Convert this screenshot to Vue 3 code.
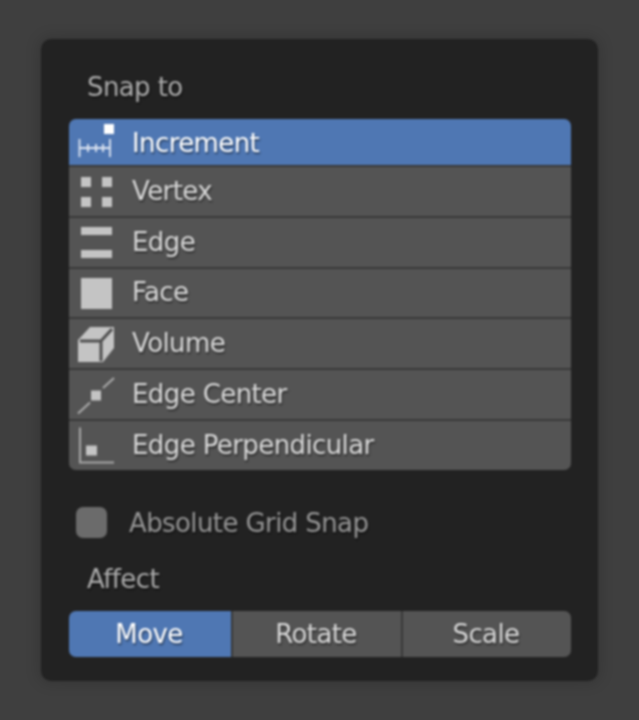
<template>
  <div class="page">
    <div class="popup">
      <div class="label">Snap to</div>
      <div class="list">
        <div
          v-for="item in snapItems"
          :key="item.name"
          class="row"
          :class="{ active: item.name === 'Increment' }"
        >
          <svg class="icon" viewBox="0 0 40 40" v-html="item.icon"></svg>
          <span class="row-text">{{ item.name }}</span>
        </div>
      </div>
      <div class="check-row">
        <div class="check"></div>
        <span>Absolute Grid Snap</span>
      </div>
      <div class="label affect">Affect</div>
      <div class="segments">
        <div v-for="s in affect" :key="s" class="seg" :class="{ active: s === 'Move' }">{{ s }}</div>
      </div>
    </div>
  </div>
</template>

<script setup>
const grey = '#c4c4c4'

const snapItems = [
  {
    name: 'Increment',
    icon: `<rect x="27" y="2" width="10" height="10" fill="#fff"/>
      <path d="M2.5 17v18M33 17v18M2 26h31M11 22v8M19 22v8M26 22v8" stroke="#dfe6f2" stroke-width="1.8" fill="none"/>`
  },
  {
    name: 'Vertex',
    icon: `<g fill="${grey}"><rect x="4" y="6" width="10" height="10"/><rect x="25" y="6" width="10" height="10"/><rect x="4" y="26" width="10" height="10"/><rect x="25" y="26" width="10" height="10"/></g>`
  },
  {
    name: 'Edge',
    icon: `<g fill="${grey}"><rect x="4" y="5" width="31" height="8"/><rect x="4" y="28" width="31" height="8"/></g>`
  },
  {
    name: 'Face',
    icon: `<rect x="4" y="5" width="31" height="31" fill="${grey}"/>`
  },
  {
    name: 'Volume',
    icon: `<path d="M1 16 13 3h24v21L26 38H1z" fill="${grey}"/>
      <path d="M3 17h21v20M24 17 35 5" stroke="#4f4f4f" stroke-width="3" fill="none"/>`
  },
  {
    name: 'Edge Center',
    icon: `<rect x="14" y="15.5" width="10" height="10" fill="${grey}"/>
      <path d="M1 38.5 13 27.5M26 13 37 3" stroke="#a8a8a8" stroke-width="2.2" fill="none"/>`
  },
  {
    name: 'Edge Perpendicular',
    icon: `<rect x="9" y="20.5" width="11" height="10" fill="${grey}"/>
      <path d="M3 2.5v35h34" stroke="#a8a8a8" stroke-width="2" fill="none"/>`
  }
]

const affect = ['Move', 'Rotate', 'Scale']
</script>

<style>
html, body { margin: 0; background: #3f3f3f; }
</style>

<style scoped>
.page {
  width: 639px;
  height: 720px;
  box-sizing: border-box;
  padding: 39px 41px;
  background: #3f3f3f;
  overflow: hidden;
  font-family: "DejaVu Sans", sans-serif;
  font-size: 26px;
  letter-spacing: -0.6px;
}
.popup {
  width: 557px;
  height: 642px;
  box-sizing: border-box;
  padding: 28px 27px 0 28px;
  background: #222222;
  border-radius: 10px;
  box-shadow: 0 0 14px 3px rgba(0, 0, 0, 0.14);
  color: #acacac;
  filter: blur(0.9px);
}
.label {
  height: 40px;
  line-height: 40px;
  padding-left: 18px;
  color: #acacac;
  text-shadow: 1px 2px 2px rgba(0, 0, 0, 0.4);
}
.list {
  margin-top: 12px;
  display: flex;
  flex-direction: column;
  gap: 2px;
  background: #383838;
  border-radius: 7px;
  overflow: hidden;
}
.row {
  height: 48.8px;
  display: flex;
  align-items: center;
  padding-left: 8px;
  background: #545454;
  color: #d8d8d8;
  text-shadow: 1px 2px 2px rgba(0, 0, 0, 0.45);
}
.row.active {
  height: 46px;
  background: #4f77b3;
  color: #fff;
}
.icon {
  width: 40px;
  height: 40px;
  flex: none;
}
.row-text {
  margin-left: 15px;
  padding-bottom: 1px;
}
.row.active .row-text {
  padding-bottom: 0;
  padding-top: 1px;
}
.check-row {
  margin-top: 33px;
  height: 40px;
  display: flex;
  align-items: center;
  padding-left: 7px;
  color: #969696;
  text-shadow: 1px 2px 2px rgba(0, 0, 0, 0.4);
}
.check {
  width: 31px;
  height: 31px;
  border-radius: 7px;
  background: #6b6b6b;
  margin-right: 22px;
}
.affect {
  margin-top: 16px;
}
.segments {
  margin-top: 12px;
  height: 46px;
  display: flex;
  gap: 2px;
  background: #383838;
  border-radius: 7px;
  overflow: hidden;
}
.seg {
  flex: 1;
  box-sizing: border-box;
  padding: 1px 2px 0 0;
  display: flex;
  align-items: center;
  justify-content: center;
  background: #545454;
  color: #d8d8d8;
  text-shadow: 1px 2px 2px rgba(0, 0, 0, 0.45);
}
.seg.active {
  flex: 0 0 162px;
  background: #4f77b3;
  color: #fff;
}
</style>
